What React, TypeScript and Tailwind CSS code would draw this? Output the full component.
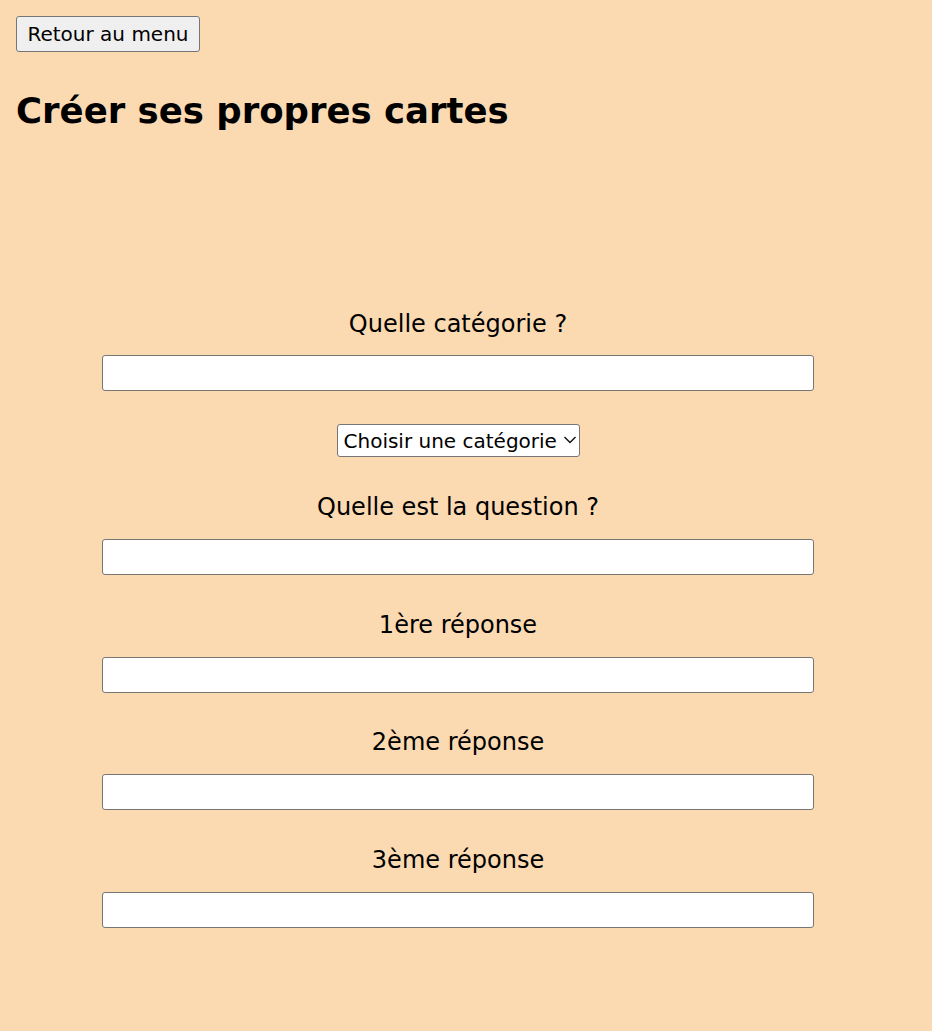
import React, { useState } from "react";

const fields = [
  "Quelle est la question ?",
  "1ère réponse",
  "2ème réponse",
  "3ème réponse",
];

const App = () => {
  const [category, setCategory] = useState("");

  return (
    <div className="min-h-screen w-full bg-[#fbdab2] text-black font-['DejaVu_Sans','Liberation_Sans',sans-serif]">
      <div className="px-4 pt-4">
        <button className="h-9 w-[184px] rounded-[3px] border border-[#767676] bg-[#efefef] text-[20px] leading-none">
          Retour au menu
        </button>
        <h1 className="mt-[35px] text-[35.5px] leading-[48px] font-bold">
          Créer ses propres cartes
        </h1>
      </div>

      <form className="w-[916px] mt-[173px] flex flex-col items-center">
        <label className="text-[24px] leading-8 mb-[15px]">Quelle catégorie ?</label>
        <input
          type="text"
          value={category}
          onChange={(e) => setCategory(e.target.value)}
          className="w-[712px] h-9 bg-white border border-[#767676] rounded-[3px] mb-[33px]"
        />
        <div className="relative mb-[34px]">
          <select
            defaultValue=""
            className="appearance-none w-[243px] h-[33px] py-0 pl-[6px] pr-5 bg-white border border-[#767676] rounded-[3px] text-[20px] leading-[28px]"
          >
            <option value="">Choisir une catégorie</option>
          </select>
          {/* chevron */}
          <svg
            className="absolute right-[3px] top-[11px] pointer-events-none"
            width="14"
            height="10"
            viewBox="0 0 14 10"
            fill="none"
            stroke="#111"
            strokeWidth="1.4"
          >
            <path d="M1.5 2 L7 7.5 L12.5 2" />
          </svg>
        </div>

        {fields.map((f) => (
          <React.Fragment key={f}>
            <label className="text-[24px] leading-8 mb-4">{f}</label>
            <input
              type="text"
              className="w-[712px] h-9 bg-white border border-[#767676] rounded-[3px] mb-[33.6px]"
            />
          </React.Fragment>
        ))}
      </form>
    </div>
  );
};

export default App;
